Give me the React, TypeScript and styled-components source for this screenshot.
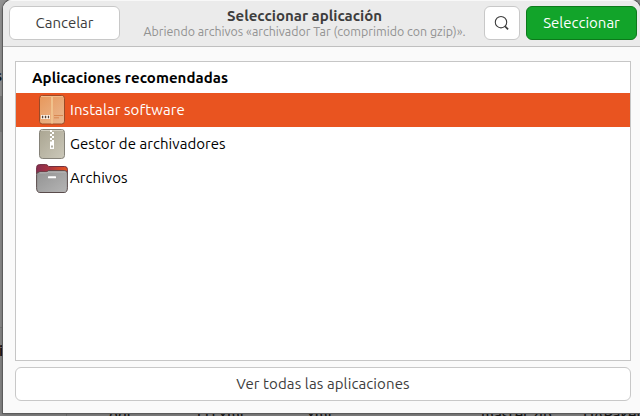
import React from "react";
import styled, { createGlobalStyle } from "styled-components";

const GlobalStyle = createGlobalStyle`
  * { box-sizing: border-box; }
  body {
    margin: 0;
    overflow: hidden;
    font-family: Ubuntu, "Noto Sans", "Open Sans", sans-serif;
    font-size: 15px;
    color: #3d3d3d;
  }
  button { font: inherit; color: inherit; padding: 0; }
`;

const Desktop = styled.div`
  position: relative;
  width: 640px;
  height: 416px;
  overflow: hidden;
  background: #858585;
  color: #161616;
`;

const Sidebar = styled.div`
  width: 67px;
  height: 416px;
  border-right: 1px solid #727272;
  background: linear-gradient(#929292 0 96px, #7b7b7b 96px 132px, #898989 132px 327px, #777 327px 328px, #858585 328px);
`;

const Behind = styled.span<{ $x: number; $y: number; $w?: number }>`
  position: absolute;
  left: ${(p) => p.$x}px;
  top: ${(p) => p.$y}px;
  line-height: 18px;
  font-weight: ${(p) => p.$w ?? 500};
  white-space: nowrap;
`;

const Dialog = styled.section`
  position: absolute;
  left: 3px;
  top: 0;
  width: 637px;
  height: 413px;
  display: flex;
  flex-direction: column;
  overflow: hidden;
  border-radius: 9px 9px 0 0;
  background: #fafafa;
  box-shadow: 0 0 0 1px #5c5c5c, 0 1px 4px rgba(0, 0, 0, 0.35);
  color: #3d3d3d;
`;

const HeaderBar = styled.header`
  flex: none;
  display: flex;
  align-items: flex-start;
  height: 47px;
  padding: 6px 3px 0 6px;
  background: #ebebeb;
  border-bottom: 1px solid #bfbfbf;
  box-shadow: inset 0 1px #f8f8f8;
`;

const Button = styled.button<{ $width?: number; $primary?: boolean }>`
  flex: none;
  display: flex;
  align-items: center;
  justify-content: center;
  width: ${(p) => (p.$width ? `${p.$width}px` : "auto")};
  height: 34px;
  padding-bottom: 1px;
  border: 1px solid ${(p) => (p.$primary ? "#0c7a1b" : "#c8c8c8")};
  border-radius: 6px;
  background: ${(p) => (p.$primary ? "#12a42a" : "#fff")};
  color: ${(p) => (p.$primary ? "#fff" : "#3d3d3d")};
`;

const Label = styled.span<{ $spacing?: number }>`
  letter-spacing: ${(p) => p.$spacing ?? 0}px;
  line-height: 18px;
  white-space: nowrap;
`;

const Titles = styled.div`
  flex: 1;
  display: flex;
  flex-direction: column;
  align-items: center;
  padding-left: 5px;
`;

const Title = styled.h1`
  margin: 0;
  font-size: 15px;
  line-height: 20px;
  font-weight: 700;
`;

const Subtitle = styled.p`
  margin: -4px 0 0;
  font-size: 12.4px;
  line-height: 17px;
  color: #929292;
`;

const Actions = styled.div`
  display: flex;
  gap: 6px;
`;

const Content = styled.main`
  flex: 1;
  display: flex;
  flex-direction: column;
  gap: 6px;
  padding: 14px 9px 12px 12px;
`;

const AppList = styled.ul`
  height: 300px;
  margin: 0;
  padding: 0;
  list-style: none;
  border: 1px solid #c6c6c6;
  background: #fff;
  color: #000;
`;

const GroupTitle = styled.li`
  height: 31px;
  padding-left: 16px;
  line-height: 31px;
  font-weight: 700;
`;

const Row = styled.li<{ $selected?: boolean }>`
  display: flex;
  align-items: center;
  gap: 2px;
  height: 34px;
  padding-left: 20px;
  background: ${(p) => (p.$selected ? "#e95420" : "transparent")};
  color: ${(p) => (p.$selected ? "#fff" : "#000")};
  svg { flex: none; }
`;

const SearchIcon = () => (
  <svg width="16" height="16" viewBox="0 0 16 16" fill="none" stroke="#3d3d3d">
    <circle cx="7" cy="7.2" r="5.7" strokeWidth="1.1" />
    <path d="M11.1 11.3 14.1 14.3" strokeWidth="1.7" />
  </svg>
);

const PackageIcon = () => (
  <svg width="32" height="32" viewBox="0 0 32 32">
    <defs>
      <linearGradient id="box" x2="0.8" y2="1">
        <stop stopColor="#e8975a" />
        <stop offset="1" stopColor="#e9b68d" />
      </linearGradient>
    </defs>
    <rect x="3.5" y="1.5" width="25" height="28.5" rx="2.8" fill="url(#box)" stroke="#9b4a27" />
    <path d="M5 2.5h22" stroke="#f3bd8d" />
    <path d="M16 2v27.5" stroke="#f0c18c" strokeWidth="2" />
    <rect x="5" y="21" width="9" height="4" fill="#fff3e7" />
    <path d="M6.5 21.8v2.4M9.5 21.8v2.4M12.5 21.8v2.4" stroke="#51423a" strokeWidth="1.2" />
    <path d="M7.8 21.8v2.4M10.8 21.8v2.4" stroke="#ad9b8d" strokeWidth=".6" />
    <path d="M18 21.5h9M18 23.8h5" stroke="#d88852" />
  </svg>
);

const ArchiveIcon = () => (
  <svg width="32" height="32" viewBox="0 0 32 32">
    <defs>
      <linearGradient id="archive" x2="1" y2="1">
        <stop stopColor="#aaa591" />
        <stop offset="1" stopColor="#cbc8ba" />
      </linearGradient>
    </defs>
    <rect x="3.5" y="1.5" width="25" height="29" rx="3" fill="url(#archive)" stroke="#858279" />
    <path d="M5 2.5h22" stroke="#d0cdbf" />
    <path d="M14 2h2v2h-2zM16 4h2v2h-2zM14 6h2v2h-2zM16 8h2v2h-2zM14 10h2v2h-2zM16 12h2v2h-2z" fill="#fff" />
    <path d="M14 13.5h4v7.5h-4z" fill="#fff" />
    <path d="M15.2 17.5h1.6v2h-1.6z" fill="#9c9888" />
  </svg>
);

const FolderIcon = () => (
  <svg width="32" height="32" viewBox="0 0 32 32">
    <defs>
      <linearGradient id="tab">
        <stop stopColor="#862d51" />
        <stop offset="0.45" stopColor="#ac353f" />
        <stop offset="1" stopColor="#e95420" />
      </linearGradient>
      <linearGradient id="front" x2="1" y2="1">
        <stop stopColor="#929292" />
        <stop offset="1" stopColor="#b5b5b5" />
      </linearGradient>
    </defs>
    <path d="M.6 10V5.5Q.6 2.6 3.5 2.6h6.2q1.3 0 2.2 1l.8.9h16q2.7 0 2.7 2.7V12H.6z" fill="url(#tab)" stroke="#6f3040" />
    <path d="M.6 25.8V12.5q0-2.6 2.9-2.6h6.2q1.2 0 2-.7l.6-.5h16.3q2.8 0 2.8 2.8v14.3q0 4.7-3.2 4.7H3.8Q.6 30.5.6 25.8z" fill="url(#front)" stroke="#594b4b" />
    <path d="M3.5 10.8h6.7q1.1 0 1.8-.8h16.2q1.6 0 2.1.7" fill="none" stroke="#bcbcbc" />
    <rect x="12" y="14.2" width="8" height="2.1" rx=".5" fill="#fff" />
  </svg>
);

export default function App() {
  return (
    <>
      <GlobalStyle />
      <Desktop>
        <Sidebar />
        <Behind $x={-5} $y={67} $w={700}>s</Behind>
        <Behind $x={-1} $y={342} $w={700}>i</Behind>
        <Behind $x={109} $y={406}>odt</Behind>
        <Behind $x={197} $y={406}>(1).xml</Behind>
        <Behind $x={307} $y={406}>xml</Behind>
        <Behind $x={481} $y={406}>master.zip</Behind>
        <Behind $x={583} $y={406}>DAPaker</Behind>
        <Dialog>
          <HeaderBar>
            <Button $width={111}><Label>Cancelar</Label></Button>
            <Titles>
              <Title><Label>Seleccionar aplicación</Label></Title>
              <Subtitle><Label>Abriendo archivos «archivador Tar (comprimido con gzip)».</Label></Subtitle>
            </Titles>
            <Actions>
              <Button $width={36} aria-label="Buscar"><SearchIcon /></Button>
              <Button $width={111} $primary><Label>Seleccionar</Label></Button>
            </Actions>
          </HeaderBar>
          <Content>
            <AppList>
              <GroupTitle><Label $spacing={0.06}>Aplicaciones recomendadas</Label></GroupTitle>
              <Row $selected><PackageIcon /><Label $spacing={0.08}>Instalar software</Label></Row>
              <Row><ArchiveIcon /><Label $spacing={0.05}>Gestor de archivadores</Label></Row>
              <Row><FolderIcon /><Label $spacing={0.05}>Archivos</Label></Row>
            </AppList>
            <Button><Label $spacing={0.11}>Ver todas las aplicaciones</Label></Button>
          </Content>
        </Dialog>
      </Desktop>
    </>
  );
}
